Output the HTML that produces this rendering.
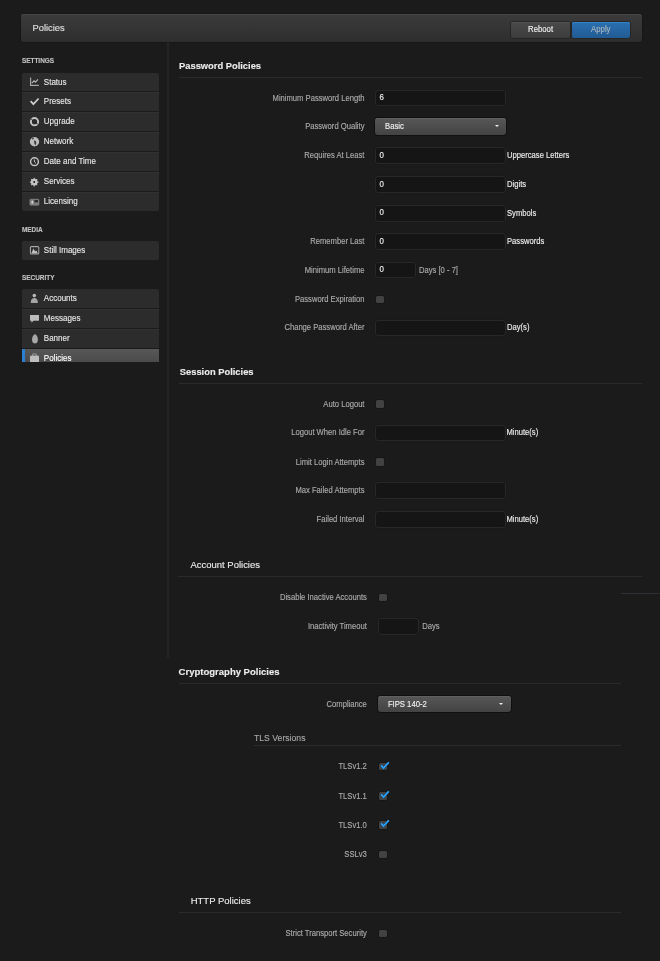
<!DOCTYPE html>
<html><head><meta charset="utf-8"><style>
html,body{margin:0;padding:0;}
body{width:660px;height:961px;background:#1b1b1b;position:relative;overflow:hidden;font-family:"Liberation Sans",sans-serif;}
.t{position:absolute;white-space:nowrap;-webkit-text-stroke:0.12px currentColor;}
#pg{position:absolute;left:0;top:0;width:660px;height:961px;filter:blur(0.3px);}
.b{position:absolute;}
.ic{position:absolute;width:10px;height:10px;}
.ic svg{display:block;}
</style></head><body><div id="pg">
<div class="b" style="left:21px;top:14px;width:621px;height:28px;border-radius:3px;background:linear-gradient(#3b3b3b,#2e2e2e);box-shadow:0 0 0 0.6px #151515,inset 0 1px 0 #474747;"></div>
<div class="t" style="left:32.50px;top:24.47px;font-size:9.37px;line-height:9.37px;color:#e0e0e0;transform:scaleY(1.04);transform-origin:0 7.93px;">Policies</div>
<div class="b" style="left:511.2px;top:21.8px;width:58.8px;height:16.1px;border-radius:2px;background:linear-gradient(#4a4a4a,#3c3c3c);box-shadow:0 0 0 0.8px #222,inset 0 1px 0 #525252;"></div>
<div class="t" style="left:440.60px;width:200px;text-align:center;top:26.34px;font-size:7.75px;line-height:7.75px;color:#f0f0f0;transform:scaleY(1.15);transform-origin:0 6.56px;">Reboot</div>
<div class="b" style="left:571.5px;top:21.8px;width:58.5px;height:16.1px;border-radius:2px;background:linear-gradient(#2a6fb0,#225b93);box-shadow:0 0 0 0.8px #222,inset 0 1px 0 #3384cf;"></div>
<div class="t" style="left:500.80px;width:200px;text-align:center;top:26.34px;font-size:7.75px;line-height:7.75px;color:#aab4be;transform:scaleY(1.15);transform-origin:0 6.56px;">Apply</div>
<div class="b" style="left:167px;top:42px;width:2px;height:616px;background:#242424;"></div>
<div class="t" style="left:21.90px;top:58.34px;font-size:6.45px;line-height:6.45px;color:#c2c2c2;font-weight:bold;">SETTINGS</div>
<div class="b" style="left:21.7px;top:73px;width:137.8px;height:18px;border-top-left-radius:2px;border-top-right-radius:2px;background:#2c2c2c;"></div>
<div class="t" style="left:43.80px;top:79.09px;font-size:8.04px;line-height:8.04px;color:#e6e6e6;transform:scaleY(1.2);transform-origin:0 6.81px;">Status</div>
<div class="b" style="left:21.7px;top:92px;width:137.8px;height:19px;background:#2c2c2c;box-shadow:inset 0 1px 0 #323232;"></div>
<div class="t" style="left:43.80px;top:98.09px;font-size:8.04px;line-height:8.04px;color:#e6e6e6;transform:scaleY(1.2);transform-origin:0 6.81px;">Presets</div>
<div class="b" style="left:21.7px;top:112px;width:137.8px;height:19px;background:#2c2c2c;box-shadow:inset 0 1px 0 #323232;"></div>
<div class="t" style="left:43.80px;top:118.09px;font-size:8.04px;line-height:8.04px;color:#e6e6e6;transform:scaleY(1.2);transform-origin:0 6.81px;">Upgrade</div>
<div class="b" style="left:21.7px;top:132px;width:137.8px;height:19px;background:#2c2c2c;box-shadow:inset 0 1px 0 #323232;"></div>
<div class="t" style="left:43.80px;top:138.09px;font-size:8.04px;line-height:8.04px;color:#e6e6e6;transform:scaleY(1.2);transform-origin:0 6.81px;">Network</div>
<div class="b" style="left:21.7px;top:152px;width:137.8px;height:19px;background:#2c2c2c;box-shadow:inset 0 1px 0 #323232;"></div>
<div class="t" style="left:43.80px;top:158.09px;font-size:8.04px;line-height:8.04px;color:#e6e6e6;transform:scaleY(1.2);transform-origin:0 6.81px;">Date and Time</div>
<div class="b" style="left:21.7px;top:172px;width:137.8px;height:19px;background:#2c2c2c;box-shadow:inset 0 1px 0 #323232;"></div>
<div class="t" style="left:43.80px;top:178.09px;font-size:8.04px;line-height:8.04px;color:#e6e6e6;transform:scaleY(1.2);transform-origin:0 6.81px;">Services</div>
<div class="b" style="left:21.7px;top:192px;width:137.8px;height:19px;border-bottom-left-radius:2px;border-bottom-right-radius:2px;background:#2c2c2c;box-shadow:inset 0 1px 0 #323232;"></div>
<div class="t" style="left:43.80px;top:198.09px;font-size:8.04px;line-height:8.04px;color:#e6e6e6;transform:scaleY(1.2);transform-origin:0 6.81px;">Licensing</div>
<div class="t" style="left:21.90px;top:226.74px;font-size:6.45px;line-height:6.45px;color:#c2c2c2;font-weight:bold;">MEDIA</div>
<div class="b" style="left:21.7px;top:241px;width:137.8px;height:18.5px;border-top-left-radius:2px;border-top-right-radius:2px;border-bottom-left-radius:2px;border-bottom-right-radius:2px;background:#2c2c2c;"></div>
<div class="t" style="left:43.80px;top:247.09px;font-size:8.04px;line-height:8.04px;color:#e6e6e6;transform:scaleY(1.2);transform-origin:0 6.81px;">Still Images</div>
<div class="t" style="left:21.90px;top:275.04px;font-size:6.45px;line-height:6.45px;color:#c2c2c2;font-weight:bold;">SECURITY</div>
<div class="b" style="left:21.7px;top:289px;width:137.8px;height:19px;border-top-left-radius:2px;border-top-right-radius:2px;background:#2c2c2c;"></div>
<div class="t" style="left:43.80px;top:295.09px;font-size:8.04px;line-height:8.04px;color:#e6e6e6;transform:scaleY(1.2);transform-origin:0 6.81px;">Accounts</div>
<div class="b" style="left:21.7px;top:309px;width:137.8px;height:19px;background:#2c2c2c;box-shadow:inset 0 1px 0 #323232;"></div>
<div class="t" style="left:43.80px;top:315.09px;font-size:8.04px;line-height:8.04px;color:#e6e6e6;transform:scaleY(1.2);transform-origin:0 6.81px;">Messages</div>
<div class="b" style="left:21.7px;top:329px;width:137.8px;height:19px;background:#2c2c2c;box-shadow:inset 0 1px 0 #323232;"></div>
<div class="t" style="left:43.80px;top:335.09px;font-size:8.04px;line-height:8.04px;color:#e6e6e6;transform:scaleY(1.2);transform-origin:0 6.81px;">Banner</div>
<div class="b" style="left:21.7px;top:349px;width:137.8px;height:13px;background:linear-gradient(#575757,#4b4b4b);"></div>
<div class="b" style="left:21.7px;top:349px;width:3.3px;height:13px;background:#2a7fd0;"></div>
<div class="t" style="left:43.80px;top:355.09px;font-size:8.04px;line-height:8.04px;color:#ffffff;transform:scaleY(1.2);transform-origin:0 6.81px;">Policies</div>
<svg class="b" style="left:0;top:0;filter:drop-shadow(0 0 0.6px #111)" width="170" height="370" viewBox="0 0 170 370">
<path d="M30.6 77.4V85.4H38.9" stroke="#a8a8a8" stroke-width="1.2" fill="none"/>
<path d="M31.8 83.2L34 80.8L35.5 82.2L38 79.4" stroke="#bdbdbd" stroke-width="1.2" fill="none"/>
<path d="M30.6 101.2L33.4 104.1L38.6 98.5" stroke="#cfcfcf" stroke-width="1.8" fill="none"/>
<circle cx="34.5" cy="121.7" r="3.6" stroke="#c4c4c4" stroke-width="2" fill="none"/>
<path d="M31.2 119.4L33.2 120.6M37.8 124L35.8 122.8" stroke="#2c2c2c" stroke-width="0.9"/>
<circle cx="34.5" cy="141.8" r="4.7" fill="#bcbcbc"/>
<path d="M32.3 137.6Q34 137.4 33.8 138.8L32.6 139.8Q32 139 32.3 137.6Z" fill="#333"/>
<path d="M34 140.6Q35.8 140.4 36.3 142.4L35.6 145.2Q34.6 144.8 34.4 143.2Z" fill="#333"/>
<circle cx="34.5" cy="161.7" r="3.9" stroke="#c8c8c8" stroke-width="1.5" fill="none"/>
<path d="M34.2 159.4L34.6 162L36 163.4" stroke="#c8c8c8" stroke-width="1" fill="none"/>
<circle cx="34.2" cy="182.1" r="3.4" fill="#c4c4c4"/>
<path d="M34.2 177.8V186.4M29.9 182.1H38.5M31.2 179.1L37.2 185.1M37.2 179.1L31.2 185.1" stroke="#c4c4c4" stroke-width="1.2"/>
<circle cx="34.2" cy="182.1" r="1" fill="#1a1a1a"/>
<rect x="29.9" y="199.2" width="9" height="6" rx="0.8" fill="#7a7a7a" stroke="#9a9a9a" stroke-width="0.6"/>
<rect x="34.4" y="200.1" width="3.6" height="2.2" fill="#262626"/>
<ellipse cx="32.3" cy="202.2" rx="0.9" ry="1.6" fill="#d4d4d4"/>
<rect x="30.4" y="246.6" width="8.4" height="7.4" rx="1" stroke="#a8a8a8" stroke-width="1.1" fill="none"/>
<path d="M31.4 253.4L33.3 248.6L35.2 251.2L36.6 250.4L37.8 253.4Z" fill="#c0c0c0"/>
<circle cx="34.3" cy="295.6" r="1.8" fill="#b8b8b8"/>
<path d="M30.7 303Q30.7 298 34.3 298Q37.9 298 37.9 303Z" fill="#a4a4a4"/>
<path d="M30 315H39V320.8H33.6L31.4 322.8V320.8H30Z" fill="#bdbdbd"/>
<path d="M35 334Q37.9 335.5 37.9 339.5Q37.9 343.4 35 343.4Q32 343.4 32 339.5Q32 335.5 35 334Z" fill="#a8a8a8"/>
<rect x="30" y="355.6" width="9" height="8" rx="0.8" fill="#bdbdbd"/>
<path d="M32.8 356V353.9H36.2V356" stroke="#bdbdbd" stroke-width="0.9" fill="none"/>
</svg>
<div class="b" style="left:0px;top:362px;width:165px;height:10px;background:#1b1b1b;"></div>
<div class="t" style="left:179.00px;top:62.09px;font-size:9.35px;line-height:9.35px;color:#ececec;font-weight:bold;">Password Policies</div>
<div class="b" style="left:179px;top:77.3px;width:463px;height:1px;background:#2b2b2b;"></div>
<div class="t" style="right:295.50px;top:94.84px;font-size:7.63px;line-height:7.63px;color:#acacac;transform:scaleY(1.2);transform-origin:0 6.46px;">Minimum Password Length</div>
<div class="b" style="left:375.3px;top:89.7px;width:130.8px;height:16.8px;box-sizing:border-box;border:1.5px solid #282828;border-radius:3px;background:#151515;box-shadow:0 0 0 0.5px #181818;"></div>
<div class="t" style="left:379.60px;top:94.21px;font-size:7.9px;line-height:7.9px;color:#f2f2f2;transform:scaleY(1.2);transform-origin:0 6.69px;">6</div>
<div class="t" style="right:295.50px;top:123.24px;font-size:7.63px;line-height:7.63px;color:#acacac;transform:scaleY(1.2);transform-origin:0 6.46px;">Password Quality</div>
<div class="b" style="left:375.3px;top:118.2px;width:131px;height:16.5px;border-radius:3px;background:linear-gradient(#575757,#434343);box-shadow:0 0 0 0.9px #101010,inset 0 1px 0 #606060;"></div>
<div class="t" style="left:385.00px;top:122.88px;font-size:7.7px;line-height:7.7px;color:#f0f0f0;transform:scaleY(1.2);transform-origin:0 6.52px;">Basic</div>
<div class="b" style="left:494.8px;top:125.2px;width:0;height:0;border-left:2.5px solid transparent;border-right:2.5px solid transparent;border-top:2.5px solid #eee;"></div>
<div class="t" style="right:295.50px;top:152.24px;font-size:7.63px;line-height:7.63px;color:#acacac;transform:scaleY(1.2);transform-origin:0 6.46px;">Requires At Least</div>
<div class="b" style="left:375.3px;top:147.2px;width:130.8px;height:16.8px;box-sizing:border-box;border:1.5px solid #282828;border-radius:3px;background:#151515;box-shadow:0 0 0 0.5px #181818;"></div>
<div class="t" style="left:379.60px;top:151.71px;font-size:7.9px;line-height:7.9px;color:#f2f2f2;transform:scaleY(1.2);transform-origin:0 6.69px;">0</div>
<div class="t" style="left:507.00px;top:152.24px;font-size:7.63px;line-height:7.63px;color:#ededed;transform:scaleY(1.2);transform-origin:0 6.46px;">Uppercase Letters</div>
<div class="b" style="left:375.3px;top:176.1px;width:130.8px;height:16.8px;box-sizing:border-box;border:1.5px solid #282828;border-radius:3px;background:#151515;box-shadow:0 0 0 0.5px #181818;"></div>
<div class="t" style="left:379.60px;top:180.61px;font-size:7.9px;line-height:7.9px;color:#f2f2f2;transform:scaleY(1.2);transform-origin:0 6.69px;">0</div>
<div class="t" style="left:507.00px;top:180.94px;font-size:7.63px;line-height:7.63px;color:#ededed;transform:scaleY(1.2);transform-origin:0 6.46px;">Digits</div>
<div class="b" style="left:375.3px;top:204.8px;width:130.8px;height:16.8px;box-sizing:border-box;border:1.5px solid #282828;border-radius:3px;background:#151515;box-shadow:0 0 0 0.5px #181818;"></div>
<div class="t" style="left:379.60px;top:209.31px;font-size:7.9px;line-height:7.9px;color:#f2f2f2;transform:scaleY(1.2);transform-origin:0 6.69px;">0</div>
<div class="t" style="left:507.00px;top:209.64px;font-size:7.63px;line-height:7.63px;color:#ededed;transform:scaleY(1.2);transform-origin:0 6.46px;">Symbols</div>
<div class="t" style="right:295.50px;top:238.04px;font-size:7.63px;line-height:7.63px;color:#acacac;transform:scaleY(1.2);transform-origin:0 6.46px;">Remember Last</div>
<div class="b" style="left:375.3px;top:233.2px;width:130.8px;height:16.8px;box-sizing:border-box;border:1.5px solid #282828;border-radius:3px;background:#151515;box-shadow:0 0 0 0.5px #181818;"></div>
<div class="t" style="left:379.60px;top:237.71px;font-size:7.9px;line-height:7.9px;color:#f2f2f2;transform:scaleY(1.2);transform-origin:0 6.69px;">0</div>
<div class="t" style="left:507.00px;top:238.04px;font-size:7.63px;line-height:7.63px;color:#ededed;transform:scaleY(1.2);transform-origin:0 6.46px;">Passwords</div>
<div class="t" style="right:295.50px;top:266.84px;font-size:7.63px;line-height:7.63px;color:#acacac;transform:scaleY(1.2);transform-origin:0 6.46px;">Minimum Lifetime</div>
<div class="b" style="left:375.3px;top:261.6px;width:40.4px;height:16.8px;box-sizing:border-box;border:1.5px solid #282828;border-radius:3px;background:#151515;box-shadow:0 0 0 0.5px #181818;"></div>
<div class="t" style="left:379.60px;top:266.11px;font-size:7.9px;line-height:7.9px;color:#f2f2f2;transform:scaleY(1.2);transform-origin:0 6.69px;">0</div>
<div class="t" style="left:419.00px;top:266.84px;font-size:7.63px;line-height:7.63px;color:#acacac;transform:scaleY(1.2);transform-origin:0 6.46px;">Days [0 - 7]</div>
<div class="t" style="right:295.50px;top:296.04px;font-size:7.63px;line-height:7.63px;color:#acacac;transform:scaleY(1.2);transform-origin:0 6.46px;">Password Expiration</div>
<div class="b" style="left:376.0px;top:295.7px;width:8.2px;height:7.6px;border-radius:1.5px;background:#424242;box-shadow:0 0 0 0.8px #161616;"></div>
<div class="t" style="right:295.50px;top:324.44px;font-size:7.63px;line-height:7.63px;color:#acacac;transform:scaleY(1.2);transform-origin:0 6.46px;">Change Password After</div>
<div class="b" style="left:375.3px;top:319.6px;width:130.8px;height:16.8px;box-sizing:border-box;border:1.5px solid #282828;border-radius:3px;background:#151515;box-shadow:0 0 0 0.5px #181818;"></div>
<div class="t" style="left:507.00px;top:324.44px;font-size:7.63px;line-height:7.63px;color:#ededed;transform:scaleY(1.2);transform-origin:0 6.46px;">Day(s)</div>
<div class="t" style="left:179.80px;top:368.29px;font-size:9.35px;line-height:9.35px;color:#ececec;font-weight:bold;">Session Policies</div>
<div class="b" style="left:179px;top:382.9px;width:463px;height:1px;background:#2b2b2b;"></div>
<div class="t" style="right:295.50px;top:400.84px;font-size:7.63px;line-height:7.63px;color:#acacac;transform:scaleY(1.2);transform-origin:0 6.46px;">Auto Logout</div>
<div class="b" style="left:375.9px;top:400.2px;width:8.2px;height:7.6px;border-radius:1.5px;background:#424242;box-shadow:0 0 0 0.8px #161616;"></div>
<div class="t" style="right:295.50px;top:429.14px;font-size:7.63px;line-height:7.63px;color:#acacac;transform:scaleY(1.2);transform-origin:0 6.46px;">Logout When Idle For</div>
<div class="b" style="left:375.3px;top:424.5px;width:130.8px;height:16.8px;box-sizing:border-box;border:1.5px solid #282828;border-radius:3px;background:#151515;box-shadow:0 0 0 0.5px #181818;"></div>
<div class="t" style="left:506.40px;top:429.14px;font-size:7.63px;line-height:7.63px;color:#ededed;transform:scaleY(1.2);transform-origin:0 6.46px;">Minute(s)</div>
<div class="t" style="right:295.50px;top:458.64px;font-size:7.63px;line-height:7.63px;color:#acacac;transform:scaleY(1.2);transform-origin:0 6.46px;">Limit Login Attempts</div>
<div class="b" style="left:375.9px;top:458.09999999999997px;width:8.2px;height:7.6px;border-radius:1.5px;background:#424242;box-shadow:0 0 0 0.8px #161616;"></div>
<div class="t" style="right:295.50px;top:487.14px;font-size:7.63px;line-height:7.63px;color:#acacac;transform:scaleY(1.2);transform-origin:0 6.46px;">Max Failed Attempts</div>
<div class="b" style="left:375.3px;top:482.2px;width:130.8px;height:16.8px;box-sizing:border-box;border:1.5px solid #282828;border-radius:3px;background:#151515;box-shadow:0 0 0 0.5px #181818;"></div>
<div class="t" style="right:295.50px;top:516.04px;font-size:7.63px;line-height:7.63px;color:#acacac;transform:scaleY(1.2);transform-origin:0 6.46px;">Failed Interval</div>
<div class="b" style="left:375.3px;top:511px;width:130.8px;height:16.8px;box-sizing:border-box;border:1.5px solid #282828;border-radius:3px;background:#151515;box-shadow:0 0 0 0.5px #181818;"></div>
<div class="t" style="left:506.40px;top:516.04px;font-size:7.63px;line-height:7.63px;color:#ededed;transform:scaleY(1.2);transform-origin:0 6.46px;">Minute(s)</div>
<div class="t" style="left:190.50px;top:559.68px;font-size:9.47px;line-height:9.47px;color:#ececec;">Account Policies</div>
<div class="b" style="left:178.2px;top:576.2px;width:463.8px;height:1px;background:#2b2b2b;"></div>
<div class="b" style="left:621px;top:592.8px;width:39px;height:1px;background:#2d3136;"></div>
<div class="t" style="right:293.20px;top:594.14px;font-size:7.63px;line-height:7.63px;color:#acacac;transform:scaleY(1.2);transform-origin:0 6.46px;">Disable Inactive Accounts</div>
<div class="b" style="left:378.9px;top:593.7px;width:8.2px;height:7.6px;border-radius:1.5px;background:#424242;box-shadow:0 0 0 0.8px #161616;"></div>
<div class="t" style="right:293.20px;top:623.34px;font-size:7.63px;line-height:7.63px;color:#acacac;transform:scaleY(1.2);transform-origin:0 6.46px;">Inactivity Timeout</div>
<div class="b" style="left:378.2px;top:617.9px;width:40.8px;height:16.8px;box-sizing:border-box;border:1.5px solid #282828;border-radius:3px;background:#151515;box-shadow:0 0 0 0.5px #181818;"></div>
<div class="t" style="left:422.30px;top:623.34px;font-size:7.63px;line-height:7.63px;color:#acacac;transform:scaleY(1.2);transform-origin:0 6.46px;">Days</div>
<div class="t" style="left:178.60px;top:667.44px;font-size:9.52px;line-height:9.52px;color:#ececec;font-weight:bold;">Cryptography Policies</div>
<div class="b" style="left:178.6px;top:683.3px;width:442.4px;height:1px;background:#2b2b2b;"></div>
<div class="t" style="right:293.20px;top:701.44px;font-size:7.63px;line-height:7.63px;color:#acacac;transform:scaleY(1.2);transform-origin:0 6.46px;">Compliance</div>
<div class="b" style="left:378.2px;top:695.9px;width:132.5px;height:16.5px;border-radius:3px;background:linear-gradient(#575757,#434343);box-shadow:0 0 0 0.9px #101010,inset 0 1px 0 #606060;"></div>
<div class="t" style="left:387.90px;top:700.58px;font-size:7.7px;line-height:7.7px;color:#f0f0f0;transform:scaleY(1.2);transform-origin:0 6.52px;">FIPS 140-2</div>
<div class="b" style="left:499.2px;top:702.9px;width:0;height:0;border-left:2.5px solid transparent;border-right:2.5px solid transparent;border-top:2.5px solid #eee;"></div>
<div class="t" style="left:254.00px;top:733.67px;font-size:8.66px;line-height:8.66px;color:#a8a8a8;transform:scaleY(1.12);transform-origin:0 7.33px;">TLS Versions</div>
<div class="b" style="left:254px;top:745.4px;width:367px;height:1px;background:#2b2b2b;"></div>
<div class="t" style="right:293.20px;top:763.44px;font-size:7.63px;line-height:7.63px;color:#acacac;transform:scaleY(1.2);transform-origin:0 6.46px;">TLSv1.2</div>
<div class="b" style="left:378.9px;top:762.8000000000001px;width:8.2px;height:7.6px;border-radius:1.5px;background:#424242;box-shadow:0 0 0 0.8px #161616;"></div>
<svg class="b" style="left:377.9px;top:760.8000000000001px;filter:drop-shadow(0 0 0.7px #000)" width="12" height="11" viewBox="0 0 12 11"><path d="M3.6 4.9L5.5 7.1L10.3 1.9" stroke="#2b9ef5" stroke-width="2" fill="none" stroke-linecap="round"/></svg>
<div class="t" style="right:293.20px;top:792.64px;font-size:7.63px;line-height:7.63px;color:#acacac;transform:scaleY(1.2);transform-origin:0 6.46px;">TLSv1.1</div>
<div class="b" style="left:378.9px;top:792.1px;width:8.2px;height:7.6px;border-radius:1.5px;background:#424242;box-shadow:0 0 0 0.8px #161616;"></div>
<svg class="b" style="left:377.9px;top:790.1px;filter:drop-shadow(0 0 0.7px #000)" width="12" height="11" viewBox="0 0 12 11"><path d="M3.6 4.9L5.5 7.1L10.3 1.9" stroke="#2b9ef5" stroke-width="2" fill="none" stroke-linecap="round"/></svg>
<div class="t" style="right:293.20px;top:821.84px;font-size:7.63px;line-height:7.63px;color:#acacac;transform:scaleY(1.2);transform-origin:0 6.46px;">TLSv1.0</div>
<div class="b" style="left:378.9px;top:821.3000000000001px;width:8.2px;height:7.6px;border-radius:1.5px;background:#424242;box-shadow:0 0 0 0.8px #161616;"></div>
<svg class="b" style="left:377.9px;top:819.3000000000001px;filter:drop-shadow(0 0 0.7px #000)" width="12" height="11" viewBox="0 0 12 11"><path d="M3.6 4.9L5.5 7.1L10.3 1.9" stroke="#2b9ef5" stroke-width="2" fill="none" stroke-linecap="round"/></svg>
<div class="t" style="right:293.20px;top:851.14px;font-size:7.63px;line-height:7.63px;color:#acacac;transform:scaleY(1.2);transform-origin:0 6.46px;">SSLv3</div>
<div class="b" style="left:378.9px;top:850.6px;width:8.2px;height:7.6px;border-radius:1.5px;background:#424242;box-shadow:0 0 0 0.8px #161616;"></div>
<div class="t" style="left:190.70px;top:896.16px;font-size:9.5px;line-height:9.5px;color:#ececec;">HTTP Policies</div>
<div class="b" style="left:179px;top:911.7px;width:442px;height:1px;background:#2b2b2b;"></div>
<div class="t" style="right:293.20px;top:929.84px;font-size:7.63px;line-height:7.63px;color:#acacac;transform:scaleY(1.2);transform-origin:0 6.46px;">Strict Transport Security</div>
<div class="b" style="left:378.9px;top:929.6px;width:8.2px;height:7.6px;border-radius:1.5px;background:#424242;box-shadow:0 0 0 0.8px #161616;"></div>
</div></body></html>
